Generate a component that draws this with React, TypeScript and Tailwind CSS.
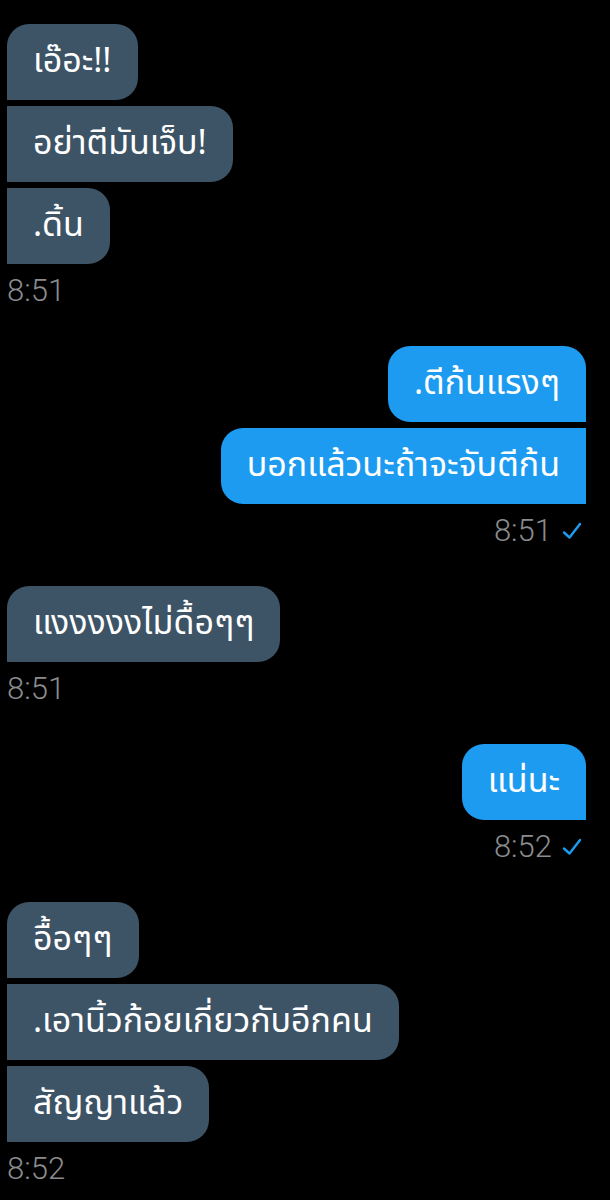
import React from 'react';

type Group = { side: 'in' | 'out'; time: string; msgs: string[] };

const groups: Group[] = [
  { side: 'in', time: '8:51', msgs: ['เอ๊อะ!!', 'อย่าตีมันเจ็บ!', '.ดิ้น'] },
  { side: 'out', time: '8:51', msgs: ['.ตีก้นแรงๆ', 'บอกแล้วนะถ้าจะจับตีก้น'] },
  { side: 'in', time: '8:51', msgs: ['แงงงงงไม่ดื้อๆๆ'] },
  { side: 'out', time: '8:52', msgs: ['แน่นะ'] },
  { side: 'in', time: '8:52', msgs: ['อื้อๆๆ', '.เอานิ้วก้อยเกี่ยวกับอีกคน', 'สัญญาแล้ว'] },
];

function Check() {
  return (
    <svg width="22" height="22" viewBox="0 0 22 22" fill="none" className="ml-[9px]">
      <path d="M3 12.5 L8.5 17.5 L19 4" stroke="#1d9bf0" strokeWidth="2.4" strokeLinecap="round" strokeLinejoin="round" />
    </svg>
  );
}

function Bubble({ text, side, first }: { text: string; side: 'in' | 'out'; first: boolean }) {
  const shape =
    side === 'in'
      ? first
        ? 'rounded-r-[22px] rounded-tl-[22px] bg-[#3d5366]'
        : 'rounded-r-[22px] bg-[#3d5366]'
      : first
      ? 'rounded-l-[22px] rounded-tr-[22px] bg-[#1d9bf0]'
      : 'rounded-l-[22px] bg-[#1d9bf0]';
  return (
    <div className={`h-[76px] px-[26px] flex items-center text-white text-[34px] leading-none ${shape}`}>
      {text}
    </div>
  );
}

export default function App() {
  return (
    <div
      className="w-[610px] min-h-[1200px] bg-black pt-[24px] pl-[7px] pr-[24px] flex flex-col gap-[37px]"
      style={{ fontFamily: '"Noto Sans Thai", "Noto Sans", Roboto, sans-serif' }}
    >
      {groups.map((g, gi) => (
        <div key={gi} className={`flex flex-col ${g.side === 'in' ? 'items-start' : 'items-end'}`}>
          <div className={`flex flex-col gap-[6px] ${g.side === 'in' ? 'items-start' : 'items-end'}`}>
            {g.msgs.map((m, i) => (
              <Bubble key={i} text={m} side={g.side} first={i === 0} />
            ))}
          </div>
          <div
            className={`mt-[9px] h-[36px] flex items-center text-[31px] font-light text-[#8a8c8f] ${
              g.side === 'out' ? 'pr-[3px]' : ''
            }`}
            style={{ fontFamily: 'Roboto, sans-serif' }}
          >
            {g.time}
            {g.side === 'out' && <Check />}
          </div>
        </div>
      ))}
    </div>
  );
}
